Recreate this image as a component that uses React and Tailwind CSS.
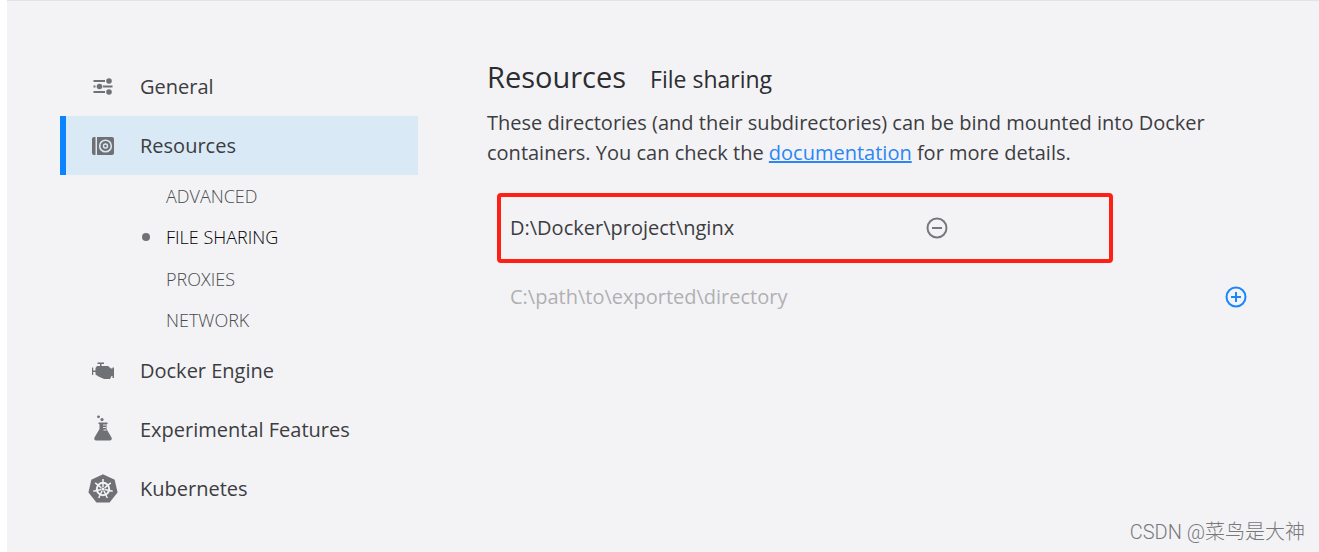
const GRAY = '#707175';

function SlidersIcon() {
  return (
    <svg viewBox="0 0 20 18" className="h-[18px] w-5" fill={GRAY} stroke={GRAY}>
      <path d="M0.500 3h11.500M0.500 8.500h2M10 8.500H19.500M0.500 14h11.500" strokeWidth="2" fill="none" />
      <circle cx="16" cy="3" r="2.800" stroke="none" />
      <circle cx="6.500" cy="8.500" r="2.800" stroke="none" />
      <circle cx="16" cy="14" r="2.800" stroke="none" />
    </svg>
  );
}

function DiskIcon() {
  return (
    <svg viewBox="0 0 22 18" className="h-[18px] w-[22px]" fill={GRAY}>
      <path d="M3.500 0v18H2a2 2 0 0 1-2-2V2a2 2 0 0 1 2-2z" />
      <path d="M5 0h15a2 2 0 0 1 2 2v14a2 2 0 0 1-2 2H5z" />
      <circle cx="13.500" cy="9" r="5.800" fill="none" stroke="#d9eaf6" strokeWidth="1.600" />
      <circle cx="13.500" cy="9" r="2" fill="none" stroke="#d9eaf6" strokeWidth="1.400" />
    </svg>
  );
}

function EngineIcon() {
  return (
    <svg viewBox="0 0 24 18" className="h-[18px] w-6" fill={GRAY}>
      <path d="M6.500 0.500h6.500v1.500h-2.500V4H17l3 2.500h1.500V5.500h1.500V16h-1.500v-2H20.500L19 17h-6L7.500 14.500 4.500 12.500V10H2.200V13H1V5.500h1.200v3h2.300V6L6 4h3V2H6.500z" />
    </svg>
  );
}

function FlaskIcon() {
  return (
    <svg viewBox="0 0 20 30" className="h-[30px] w-5" fill={GRAY}>
      <circle cx="5.500" cy="1.800" r="1.400" />
      <circle cx="9" cy="4.600" r="1.600" />
      <path d="M5.500 7.500h9V9h-1v5l5 8.500c.8 1.500 0 3-1.700 3H3.200c-1.700 0-2.500-1.500-1.700-3l5-8.500V9h-1z" />
      <path d="M10 10h3M10 12.500h3M10.500 15h3" stroke="#f3f3f6" strokeWidth="0.900" />
    </svg>
  );
}

function HelmIcon() {
  return (
    <svg viewBox="0 0 30 30" className="size-[30px]">
      <path d="M15 1.200 25.900 6.400 28.600 18.100 21.100 27.600H8.900L1.400 18.100 4.100 6.400z" fill={GRAY} stroke={GRAY} strokeWidth="1.800" strokeLinejoin="round" />
      <g stroke="#f3f3f6" fill="none">
        <circle cx="15" cy="15" r="6.200" strokeWidth="2" />
        <path d="M15 13V5M16.600 13.800 22.800 8.800M16.900 15.500 24.700 17.200M15.900 16.800 19.300 24M14.100 16.800 10.700 24M13.100 15.500 5.300 17.200M13.400 13.800 7.200 8.800" strokeWidth="1.500" />
      </g>
      <circle cx="15" cy="15" r="1.600" fill="#f3f3f6" />
    </svg>
  );
}

function CircleIcon({ plus }) {
  return (
    <svg viewBox="0 0 22 22" className="size-[22px]" fill="none" stroke="currentColor" strokeWidth="2">
      <circle cx="11" cy="11" r="9.500" />
      <path d={plus ? 'M6 11h10M11 6v10' : 'M6 11h10'} />
    </svg>
  );
}

function NavItem({ icon, label, active }) {
  return (
    <a
      href="#"
      aria-current={active ? 'page' : undefined}
      className={
        active
          ? 'flex h-[59px] items-center border-l-[6px] border-[#0a84ff] bg-[#d9eaf6] pl-[22px]'
          : 'flex h-[59px] items-center border-l-[6px] border-transparent pl-[22px]'
      }
    >
      <span className="flex w-[30px] justify-center">{icon}</span>
      <span className="pl-[22px]">{label}</span>
    </a>
  );
}

const SUB_ITEMS = ['ADVANCED', 'FILE SHARING', 'PROXIES', 'NETWORK'];

export default function App() {
  return (
    <div className="flex min-h-screen bg-white pl-[7px] font-['Open_Sans','Noto_Sans_CJK_SC',sans-serif] text-xl text-[#3c3d41]">
      <div className="relative flex flex-1 border-t border-[#e3e3e6] bg-[#f3f3f6] pl-[53px]">
        <nav className="w-[358px] shrink-0 pt-14">
          <NavItem icon={<SlidersIcon />} label="General" />
          <NavItem icon={<DiskIcon />} label="Resources" active />
          <ul className="grid h-[166px] grid-rows-4 pl-[82px] text-lg font-light text-[#4a4b4f]">
            {SUB_ITEMS.map((item) => (
              <li key={item} className="flex items-center">
                {item === 'FILE SHARING' ? (
                  <a href="#" className="flex items-center gap-4 text-black">
                    <span className="size-2 rounded-full bg-[#707175]" />
                    {item}
                  </a>
                ) : (
                  <a href="#" className="pl-6">{item}</a>
                )}
              </li>
            ))}
          </ul>
          <NavItem icon={<EngineIcon />} label="Docker Engine" />
          <NavItem icon={<FlaskIcon />} label="Experimental Features" />
          <NavItem icon={<HelmIcon />} label="Kubernetes" />
        </nav>

        <main className="flex-1 pr-[72px] pl-[69px] pt-[56px]">
          <h1 className="flex items-baseline gap-6 text-[#2c2d30]">
            <span className="text-[29px] leading-10">Resources</span>
            <span className="text-[23px] leading-10">File sharing</span>
          </h1>
          <p className="max-w-[740px] pt-[9px] leading-[30px]">
            These directories (and their subdirectories) can be bind mounted into Docker containers. You can check the{' '}
            <a href="#" className="text-[#2b86f5] underline">documentation</a> for more details.
          </p>
          <div className="ml-[10px] mt-[25px] flex h-[70px] max-w-[616px] items-center justify-between rounded border-4 border-[#ff1f14] pl-[9px] pr-[161px]">
            <span>D:\Docker\project\nginx</span>
            <button type="button" aria-label="Remove directory" className="text-[#77787b]">
              <CircleIcon />
            </button>
          </div>
          <div className="flex items-center pl-[23px] pt-5">
            <input
              type="text"
              aria-label="Directory path"
              placeholder="C:\path\to\exported\directory"
              className="min-w-0 flex-1 bg-transparent outline-none placeholder:text-[#b0b0b3]"
            />
            <button type="button" aria-label="Add directory" className="text-[#1a86fc]">
              <CircleIcon plus />
            </button>
          </div>
        </main>
        <div className="absolute right-[14px] bottom-[6px] font-['Roboto','Noto_Sans_CJK_SC',sans-serif] font-light text-[#77787b]">CSDN @菜鸟是大神</div>
      </div>
    </div>
  );
}
